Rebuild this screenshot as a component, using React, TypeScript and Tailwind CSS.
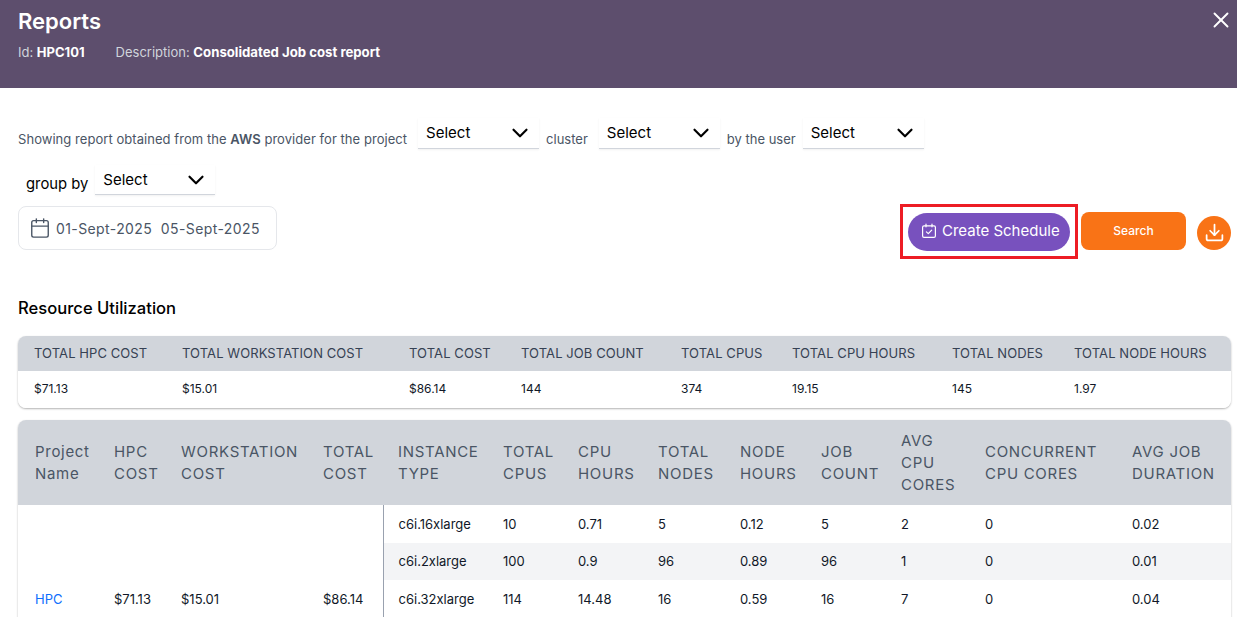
import { Calendar, ChevronDown, Download, X } from "lucide-react";

const summaryCols = [148, 227, 112, 160, 111, 160, 122, 173];
const summaryHead = ["Total HPC Cost", "Total Workstation Cost", "Total Cost", "Total Job Count", "Total CPUs", "Total CPU Hours", "Total Nodes", "Total Node Hours"];
const summaryRow = ["$71.13", "$15.01", "$86.14", "144", "374", "19.15", "145", "1.97"];

const mainCols = [80, 67, 142, 76, 104, 75, 80, 82, 81, 80, 84, 147, 115];
const mainHead = ["Project Name", "HPC Cost", "Workstation Cost", "Total Cost", "Instance Type", "Total CPUs", "CPU Hours", "Total Nodes", "Node Hours", "Job Count", "Avg CPU Cores", "Concurrent CPU Cores", "Avg Job Duration"];
const instanceRows = [
    ["c6i.16xlarge", "10", "0.71", "5", "0.12", "5", "2", "0", "0.02"],
    ["c6i.2xlarge", "100", "0.9", "96", "0.89", "96", "1", "0", "0.01"],
    ["c6i.32xlarge", "114", "14.48", "16", "0.59", "16", "7", "0", "0.04"],
];

function SelectBox({ width = "w-[121px]", height = "h-[31px]" }: { width?: string; height?: string }) {
    return (
        <div className={`${width} ${height} flex items-start justify-between pl-2 pr-[6px] pt-[4px] border-b border-gray-300 shadow-[0_1px_2px_rgba(0,0,0,0.06)] text-[15px] text-black`}>
            <span>Select</span>
            <ChevronDown className="h-[26px] w-[26px] -mt-[2px]" strokeWidth={2} />
        </div>
    );
}

export default function App() {
    return (
        <div className="h-screen overflow-hidden bg-white font-['Inter',sans-serif]">
            <div className="h-[88px] bg-[#5d4e6d] px-[18px] pt-[6px] flex justify-between text-white">
                <div>
                    <h1 className="text-[22px] leading-[30px] font-semibold">Reports</h1>
                    <div className="mt-[7px] flex gap-[31px] text-[13px] leading-[18px] text-gray-300">
                        <span>Id: <b className="font-bold text-white">HPC101</b></span>
                        <span>Description: <b className="text-[13.2px] font-bold text-white">Consolidated Job cost report</b></span>
                    </div>
                </div>
                <X className="h-[26px] w-[26px] mt-[1px] -mr-[15px]" strokeWidth={1.75} />
            </div>

            <div className="px-[18px] pr-[6px]">
                <div className="pt-[30px] flex items-start text-[13px] text-gray-600">
                    <span className="mt-[12px] leading-[18px] tracking-[0.05px]">Showing report obtained from the <b className="font-semibold">AWS</b> provider for the project</span>
                    <div className="ml-[11px]"><SelectBox /></div>
                    <span className="ml-[7px] mt-[12px] leading-[18px]">cluster</span>
                    <div className="ml-[11px]"><SelectBox /></div>
                    <span className="ml-[7px] mt-[12px] leading-[18px]">by the user</span>
                    <div className="ml-[7px]"><SelectBox /></div>
                </div>

                <div className="mt-[16px] ml-[8px] flex items-start">
                    <span className="mt-[8px] text-[14.8px] leading-[22px] text-black">group by</span>
                    <div className="ml-[7px]"><SelectBox width="w-[120px]" height="h-[30px]" /></div>
                </div>

                <div className="mt-[11px] flex items-start justify-between">
                    <div className="w-[259px] h-[44px] flex items-center gap-[5px] pl-[10px] rounded-lg border border-gray-200 text-[14px] tracking-[0.4px] text-gray-600">
                        <Calendar className="h-[22px] w-[22px]" strokeWidth={1.5} />
                        <span className="whitespace-pre">01-Sept-2025  05-Sept-2025</span>
                    </div>
                    <div className="flex items-start -mt-[2px]">
                        <div className="border-[3px] border-[#ed1c24] w-[178px] h-[55px] flex items-center pl-[5px]">
                            <button className="w-[162px] h-[38px] pb-[1px] pl-[13px] flex items-center gap-[5px] rounded-full bg-[#7851be] text-[15px] text-white">
                                <svg viewBox="0 0 16 16" className="h-[16px] w-[16px]" fill="none" stroke="currentColor" strokeWidth="1.2" strokeLinecap="round" strokeLinejoin="round">
                                    <rect x="1.6" y="2.8" width="12.8" height="11.6" rx="1.4" />
                                    <path d="M5 1.2v2.6M11 1.2v2.6M5.4 8.8l1.9 1.9 3.4-3.6" />
                                </svg>
                                Create Schedule
                            </button>
                        </div>
                        <button className="ml-[3px] mt-[8px] w-[105px] h-[38px] rounded-lg bg-[#f97316] text-[12px] font-medium text-white">Search</button>
                        <button className="ml-[11px] mt-[12px] w-[34px] h-[34px] pb-[1px] rounded-full bg-[#f97316] flex items-center justify-center text-white">
                            <Download className="h-[21px] w-[21px]" strokeWidth={2} />
                        </button>
                    </div>
                </div>

                <h2 className="mt-[37px] text-[16.6px] leading-[24px] font-medium text-black">Resource Utilization</h2>

                <div className="mt-[16px] w-[1213px] rounded-lg overflow-hidden shadow-[0_1px_2px_rgba(0,0,0,0.3)]">
                    <table className="w-full table-fixed">
                        <colgroup>
                            {summaryCols.map((w, i) => <col key={i} style={{ width: w }} />)}
                        </colgroup>
                        <thead>
                            <tr className="h-[35px] bg-[#d1d5db]">
                                {summaryHead.map((h) => (
                                    <th key={h} className="pl-4 text-left text-[13px] font-normal uppercase tracking-[0.08px] text-gray-700 whitespace-nowrap">{h}</th>
                                ))}
                            </tr>
                        </thead>
                        <tbody>
                            <tr className="h-[37px] bg-white">
                                {summaryRow.map((v, i) => (
                                    <td key={i} className="pl-4 pb-[2px] text-[12px] text-gray-900">{v}</td>
                                ))}
                            </tr>
                        </tbody>
                    </table>
                </div>

                <div className="mt-[12px] w-[1213px] rounded-t-lg overflow-hidden shadow-[0_1px_2px_rgba(0,0,0,0.3)]">
                    <table className="w-full table-fixed">
                        <colgroup>
                            {mainCols.map((w, i) => <col key={i} style={{ width: w }} />)}
                        </colgroup>
                        <thead>
                            <tr className="h-[85px] bg-[#d1d5db]">
                                {mainHead.map((h, i) => (
                                    <th key={h} className={`${i === 0 ? "pl-[17px]" : i === 4 ? "pl-[15px]" : "pl-4"} text-left text-[15px] leading-[22px] font-normal tracking-[0.7px] text-gray-600 ${h === "Project Name" ? "" : "uppercase"}`}>{h}</th>
                                ))}
                            </tr>
                        </thead>
                        <tbody className="text-[13px] text-gray-900">
                            {instanceRows.map((row, i) => (
                                <tr key={i} className={i === 1 ? "h-[37px] bg-gray-100" : "h-[38px]"}>
                                    {i === 0 && (
                                        <>
                                            <td rowSpan={5} className="pl-[17px] pt-[2px] bg-white text-[#0d6efd]">HPC</td>
                                            <td rowSpan={5} className="pl-4 pt-[2px] bg-white">$71.13</td>
                                            <td rowSpan={5} className="pl-4 pt-[2px] bg-white">$15.01</td>
                                            <td rowSpan={5} className="pl-4 pt-[2px] bg-white border-r border-gray-400">$86.14</td>
                                        </>
                                    )}
                                    {row.map((v, j) => (
                                        <td key={j} className={`${j === 0 ? "pl-[15px]" : "pl-4"} ${i === 1 ? "" : "pt-[2px]"}`}>{v}</td>
                                    ))}
                                </tr>
                            ))}
                            <tr className="h-[37px]"><td colSpan={9} /></tr>
                            <tr className="h-[37px]"><td colSpan={9} /></tr>
                        </tbody>
                    </table>
                </div>
            </div>
        </div>
    );
}
